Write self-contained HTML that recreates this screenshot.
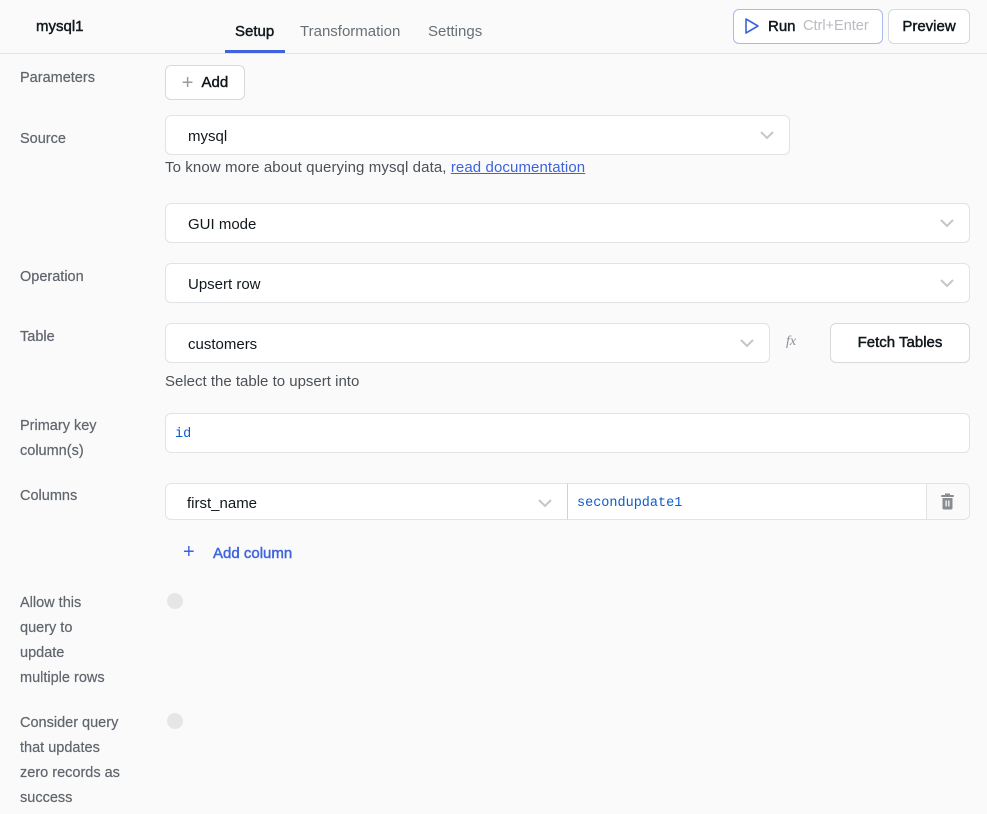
<!DOCTYPE html>
<html><head><meta charset="utf-8"><style>
*{box-sizing:border-box;margin:0;padding:0}
body{width:987px;height:814px;background:#fafafa;font-family:"Liberation Sans",sans-serif;font-size:15px;color:#11181c;position:relative;overflow:hidden}
.a{position:absolute}
.hdr{left:0;top:0;width:987px;height:54px;border-bottom:1px solid #e4e4e7;background:#fafafa}
.lbl{color:#60666d;font-size:14.5px;line-height:25px;-webkit-text-stroke:0.2px #60666d}
.box{background:#fff;border:1px solid #e2e3e6;border-radius:6px}
.sel{padding-left:22px;line-height:42px}
.chev{position:absolute;right:14px;top:50%;margin-top:-5px}
.btn{background:#fff;border:1px solid #d7d9dc;border-radius:6px;text-align:center}
.med{-webkit-text-stroke:0.45px currentColor}
.mono{font-family:"Liberation Mono",monospace;font-size:13.5px;color:#0b5cd0}
.tog{width:16px;height:16px;border-radius:50%;background:#e5e6e8}
</style></head><body>
<div class="a hdr"></div>
<div class="a med" style="left:36px;top:18px;font-size:15px">mysql1</div>
<div class="a med" style="left:235px;top:23px;font-size:15px">Setup</div>
<div class="a" style="left:225px;top:50px;width:60px;height:3px;background:#3e63dd"></div>
<div class="a" style="left:300px;top:23px;font-size:15px;color:#687076">Transformation</div>
<div class="a" style="left:428px;top:23px;font-size:15px;color:#687076">Settings</div>
<div class="a" style="left:733px;top:9px;width:150px;height:35px;background:#fff;border:1px solid #a9b8ee;border-radius:6px"></div>
<svg class="a" style="left:744px;top:17px" width="16" height="18" viewBox="0 0 16 18"><path d="M2 2 L14 9 L2 16 Z" fill="none" stroke="#3e63dd" stroke-width="1.6" stroke-linejoin="round"/></svg>
<div class="a med" style="left:768px;top:18px;font-size:15px">Run</div>
<div class="a" style="left:803px;top:18px;font-size:14.5px;color:#b9bbc0">Ctrl+Enter</div>
<div class="a btn med" style="left:888px;top:9px;width:82px;height:35px;line-height:33px;font-size:15px">Preview</div>

<div class="a lbl" style="left:20px;top:66px">Parameters</div>
<div class="a btn" style="left:165px;top:65px;width:80px;height:35px;line-height:33px;font-size:15px"><span style="color:#999;font-weight:300;font-size:20px;vertical-align:-2px;margin-right:8px">+</span><span class="med">Add</span></div>

<div class="a lbl" style="left:20px;top:127px">Source</div>
<div class="a box sel" style="left:165px;top:115px;width:625px;height:40px">mysql<svg class="chev" width="16" height="10" viewBox="0 0 16 10"><path d="M2 2 L8 8 L14 2" fill="none" stroke="#c4c6ca" stroke-width="2"/></svg></div>
<div class="a" style="left:165px;top:159px;color:#4b5157;font-size:15px;letter-spacing:0.1px">To know more about querying mysql data, <span style="color:#3e63dd;text-decoration:underline">read documentation</span></div>

<div class="a box sel" style="left:165px;top:203px;width:805px;height:40px">GUI mode<svg class="chev" width="16" height="10" viewBox="0 0 16 10"><path d="M2 2 L8 8 L14 2" fill="none" stroke="#c4c6ca" stroke-width="2"/></svg></div>

<div class="a lbl" style="left:20px;top:265px">Operation</div>
<div class="a box sel" style="left:165px;top:263px;width:805px;height:40px">Upsert row<svg class="chev" width="16" height="10" viewBox="0 0 16 10"><path d="M2 2 L8 8 L14 2" fill="none" stroke="#c4c6ca" stroke-width="2"/></svg></div>

<div class="a lbl" style="left:20px;top:325px">Table</div>
<div class="a box sel" style="left:165px;top:323px;width:605px;height:40px">customers<svg class="chev" width="16" height="10" viewBox="0 0 16 10"><path d="M2 2 L8 8 L14 2" fill="none" stroke="#c4c6ca" stroke-width="2"/></svg></div>
<div class="a" style="left:786px;top:334px;font-family:'Liberation Serif',serif;font-style:italic;color:#8a8f95;font-size:14px">fx</div>
<div class="a btn med" style="left:830px;top:323px;width:140px;height:40px;line-height:38px;font-size:15px">Fetch Tables</div>
<div class="a" style="left:165px;top:373px;color:#4b5157">Select the table to upsert into</div>

<div class="a lbl" style="left:20px;top:414px">Primary key<br>column(s)</div>
<div class="a box" style="left:165px;top:413px;width:805px;height:40px;padding-left:9px;line-height:38px"><span class="mono">id</span></div>

<div class="a lbl" style="left:20px;top:484px">Columns</div>
<div class="a box" style="left:165px;top:483px;width:805px;height:37px"></div>
<div class="a sel" style="left:165px;top:484px;line-height:40px">first_name</div>
<svg class="a" style="left:537px;top:498px" width="16" height="10" viewBox="0 0 16 10"><path d="M2 2 L8 8 L14 2" fill="none" stroke="#c4c6ca" stroke-width="2"/></svg>
<div class="a" style="left:567px;top:483px;width:360px;height:37px;border-left:1px solid #d0d2d6;border-right:1px solid #e2e3e6;padding-left:9px;line-height:36px;background:#fff;border-top:1px solid #e2e3e6;border-bottom:1px solid #e2e3e6"><span class="mono">secondupdate1</span></div>
<div class="a" style="left:927px;top:484px;width:42px;height:35px;background:#fafafa;border-radius:0 6px 6px 0"></div>
<svg class="a" style="left:940px;top:493px" width="15" height="17" viewBox="0 0 15 17"><rect x="1" y="2" width="13" height="2" rx="1" fill="#888c91"/><rect x="5" y="0.5" width="5" height="2" fill="#888c91"/><path d="M2.5 5 H12.5 V15 a1.5 1.5 0 0 1 -1.5 1.5 H4 a1.5 1.5 0 0 1 -1.5 -1.5Z" fill="#888c91"/><rect x="5.5" y="7.5" width="1.3" height="6" fill="#fafafa"/><rect x="8.2" y="7.5" width="1.3" height="6" fill="#fafafa"/></svg>

<div class="a" style="left:183px;top:541px;color:#3e63dd;font-size:20px;font-weight:300">+</div>
<div class="a med" style="left:213px;top:545px;color:#3e63dd">Add column</div>

<div class="a lbl" style="left:20px;top:591px">Allow this<br>query to<br>update<br>multiple rows</div>
<div class="a tog" style="left:167px;top:593px"></div>
<div class="a lbl" style="left:20px;top:711px">Consider query<br>that updates<br>zero records as<br>success</div>
<div class="a tog" style="left:167px;top:713px"></div>
</body></html>
